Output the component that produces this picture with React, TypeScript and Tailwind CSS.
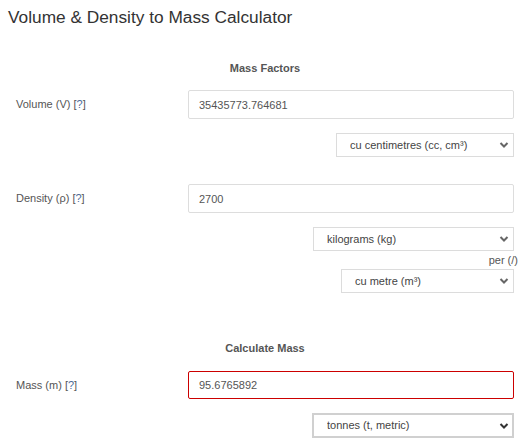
import React from 'react';

function Chevron({ dark }: { dark?: boolean }) {
    return (
        <svg
            className="absolute right-[5px] top-1/2 -translate-y-1/2 pointer-events-none"
            width="10"
            height="7"
            viewBox="0 0 10 7"
        >
            <polyline points="1.5,1.5 5,5 8.5,1.5" fill="none" stroke={dark ? '#333' : '#666'} strokeWidth="2" />
        </svg>
    );
}

function UnitSelect({ value, width, strong }: { value: string; width: string; strong?: boolean }) {
    return (
        <div className={`relative ${width}`}>
            <select
                defaultValue={value}
                className={`block appearance-none w-full bg-white text-[11px] text-[#444] pl-[13px] pr-6 outline-none ${
                    strong ? 'h-[25px] border-2 border-[#d0d0d0]' : 'h-[24px] border border-[#dcdcdc]'
                }`}
            >
                <option>{value}</option>
            </select>
            <Chevron dark={strong} />
        </div>
    );
}

function FieldRow({ label, value, error }: { label: string; value: string; error?: boolean }) {
    return (
        <div className="flex items-center">
            <div className="w-[172px] text-[11px] text-[#555]">
                {label} [<span className="text-[#4a6a9a]">?</span>]
            </div>
            <input
                defaultValue={value}
                className={`block flex-1 bg-white text-[11px] text-[#555] px-[10px] outline-none border rounded-[2px] ${
                    error ? 'h-[28px] border-[#cc0000]' : 'h-[29px] border-[#dddddd]'
                }`}
            />
        </div>
    );
}

export default function App() {
    return (
        <div className="w-[526px] h-[444px] bg-white font-['Liberation_Sans',Arial,sans-serif]">
            <h1 className="pl-2 pt-[7px] text-[17.3px] leading-[20px] text-[#333]">Volume &amp; Density to Mass Calculator</h1>

            <div className="pl-4 pr-3">
                {/* Mass Factors */}
                <h3 className="mt-[34px] text-center text-[11px] leading-[14px] font-bold text-[#555]">Mass Factors</h3>
                <div className="mt-[15px]">
                    <FieldRow label="Volume (V)" value="35435773.764681" />
                </div>
                <div className="mt-[14px] flex justify-end">
                    <UnitSelect value="cu centimetres (cc, cm³)" width="w-[178px]" />
                </div>

                <div className="mt-[27px]">
                    <FieldRow label="Density (ρ)" value="2700" />
                </div>
                <div className="mt-[14px] flex justify-end">
                    <UnitSelect value="kilograms (kg)" width="w-[201px]" />
                </div>
                <div className="mt-[3px] -mr-1 text-right text-[11px] leading-[12px] text-[#555]">per (/)</div>
                <div className="mt-[3px] flex justify-end">
                    <UnitSelect value="cu metre (m³)" width="w-[173px]" />
                </div>

                {/* Calculate Mass */}
                <h3 className="mt-[48px] text-center text-[11px] leading-[14px] font-bold text-[#555]">Calculate Mass</h3>
                <div className="mt-[16px]">
                    <FieldRow label="Mass (m)" value="95.6765892" error />
                </div>
                <div className="mt-[14px] flex justify-end">
                    <UnitSelect value="tonnes (t, metric)" width="w-[202px]" strong />
                </div>
            </div>
        </div>
    );
}
